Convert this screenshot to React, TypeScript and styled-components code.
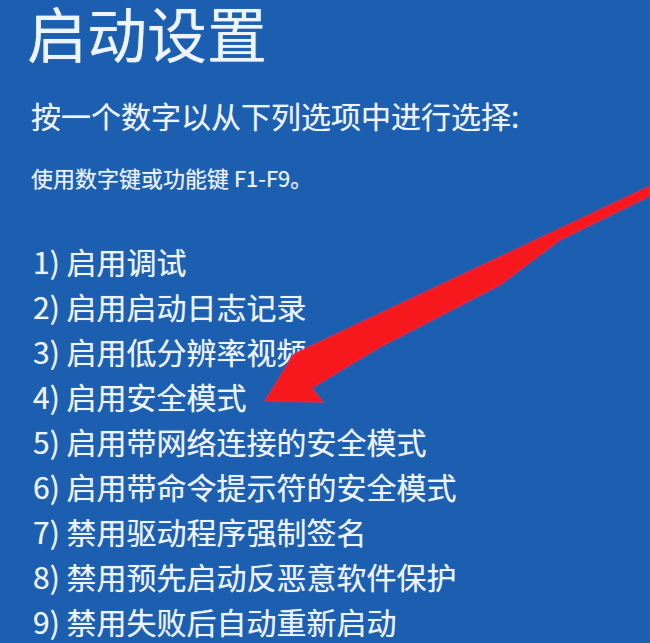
import React from 'react';
import styled, { createGlobalStyle } from 'styled-components';

const GlobalStyle = createGlobalStyle`
  html, body {
    margin: 0;
    padding: 0;
    background: #1c5fb0;
  }
  body {
    font-family: "Noto Sans CJK SC", "Noto Sans", sans-serif;
  }
`;

const Screen = styled.div`
  position: relative;
  width: 650px;
  height: 643px;
  overflow: hidden;
  box-sizing: border-box;
  padding: 2px 0 0 31px;
  background: #1c5fb0;
  color: #eef4fd;
  text-shadow: 0 0 1px rgba(255, 255, 255, 0.45);
`;

const Title = styled.h1`
  margin: 0 0 0 -4px;
  font-size: 60px;
  line-height: 60px;
  font-weight: 400;
`;

const Prompt = styled.p`
  margin: 38px 0 0;
  font-size: 30px;
  line-height: 30px;
  font-weight: 400;
`;

const Hint = styled.p`
  margin: 36px 0 0;
  font-size: 22px;
  line-height: 22px;
  font-weight: 400;
`;

const OptionList = styled.ol`
  list-style: none;
  margin: 51px 0 0;
  padding: 0 0 0 2px;
`;

const Option = styled.li`
  font-size: 30px;
  line-height: 45px;
  white-space: nowrap;
`;

const Arrow = styled.svg`
  position: absolute;
  left: 0;
  top: 0;
  pointer-events: none;
`;

const options = [
  '启用调试',
  '启用启动日志记录',
  '启用低分辨率视频',
  '启用安全模式',
  '启用带网络连接的安全模式',
  '启用带命令提示符的安全模式',
  '禁用驱动程序强制签名',
  '禁用预先启动反恶意软件保护',
  '禁用失败后自动重新启动',
];

const App: React.FC = () => (
  <>
    <GlobalStyle />
    <Screen>
      <Title>启动设置</Title>
      <Prompt>按一个数字以从下列选项中进行选择:</Prompt>
      <Hint>使用数字键或功能键 F1-F9。</Hint>
      <OptionList>
        {options.map((o, i) => (
          <Option key={o}>
            {i + 1}) {o}
          </Option>
        ))}
      </OptionList>
      <Arrow width="650" height="643" viewBox="0 0 650 643">
        <polygon
          points="265,401 294,354 650,186 650,196 560,240 500,285 380,347 312,388 323,402"
          fill="#f7181d"
          stroke="rgba(235,40,70,0.55)"
          strokeWidth="2"
          strokeLinejoin="round"
        />
      </Arrow>
    </Screen>
  </>
);

export default App;
